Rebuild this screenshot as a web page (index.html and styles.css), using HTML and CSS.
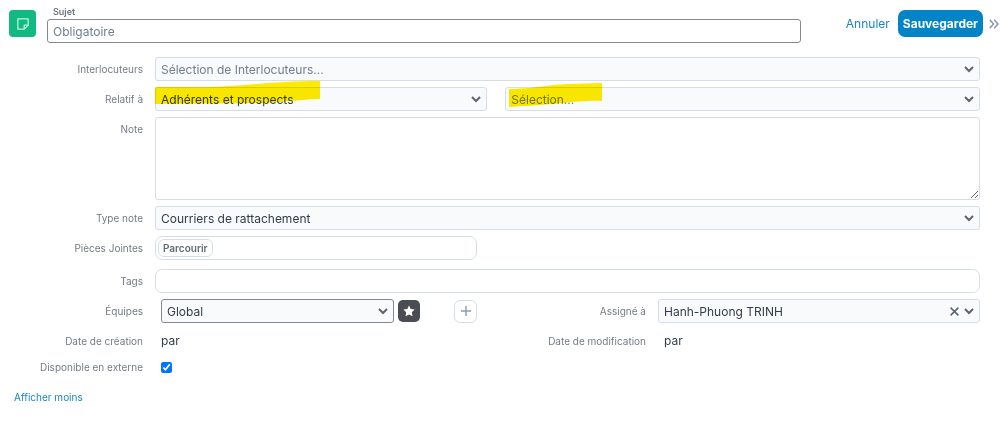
FILE: index.html
```html
<!DOCTYPE html>
<html lang="fr">
<head>
    <meta charset="UTF-8">
    <meta name="viewport" content="width=device-width, initial-scale=1.0">
    <title>Nouvelle note</title>
    <link rel="stylesheet" href="styles.css">
</head>
<body>

<form class="note-form">
    <header class="header">
        <div class="module-icon">
            <svg width="12" height="12" viewBox="0 0 11 11" fill="none" stroke="#b5f5dc" stroke-width="1.2" stroke-linejoin="round">
                <path d="M0.8 0.8h9.4v5.8l-3.6 3.6H0.8z"/>
                <path d="M10.2 6.6H6.6v3.6"/>
            </svg>
        </div>
        <div class="subject">
            <label for="subject">Sujet</label>
            <input type="text" id="subject" class="control" placeholder="Obligatoire">
        </div>
        <div class="actions">
            <a href="#" class="cancel">Annuler</a>
            <button type="button" class="save">Sauvegarder</button>
            <button type="button" class="more" aria-label="Plus d'actions">
                <svg width="10" height="10" viewBox="0 0 10 10" fill="none" stroke="#8592ad" stroke-width="1.4">
                    <path d="M0.8 0.8L4.6 5L0.8 9.2M5.2 0.8L9 5L5.2 9.2"/>
                </svg>
            </button>
        </div>
    </header>

    <div class="rows">
        <div class="row">
            <label for="contacts">Interlocuteurs</label>
            <select id="contacts" class="control empty"><option>Sélection de Interlocuteurs...</option></select>
        </div>

        <div class="row">
            <label for="related">Relatif à</label>
            <div class="related">
                <div class="marked">
                    <select id="related" class="control"><option>Adhérents et prospects</option></select>
                    <svg class="marker" width="165" height="24" viewBox="0 0 165 24" fill="#ffeb00">
                        <path d="M0 6H55C90 5 120 0 165 0V18C145 18 130 22 100 22L0 23Z"/>
                    </svg>
                </div>
                <div class="marked inset">
                    <select class="control empty" aria-label="Fiche liée"><option>Sélection...</option></select>
                    <svg class="marker" width="93" height="24" viewBox="0 0 93 24" fill="#ffeb00">
                        <path d="M0 6C25 6 35 2 60 1L93 0V18C70 17 45 22 0 24Z"/>
                    </svg>
                </div>
            </div>
        </div>

        <div class="row">
            <label for="note">Note</label>
            <textarea id="note" class="control"></textarea>
        </div>

        <div class="row">
            <label for="type">Type note</label>
            <select id="type" class="control"><option>Courriers de rattachement</option></select>
        </div>

        <div class="halves">
            <div class="row">
                <span class="label">Pièces Jointes</span>
                <div class="control rounded files">
                    <button type="button" class="browse">Parcourir</button>
                </div>
            </div>
        </div>

        <div class="row tags">
            <label for="tags">Tags</label>
            <input type="text" id="tags" class="control rounded">
        </div>

        <div class="halves">
            <div class="row">
                <label for="teams">Équipes</label>
                <div class="teams">
                    <select id="teams" class="control strong"><option>Global</option></select>
                    <button type="button" class="star" aria-label="Équipe principale">
                        <svg width="12" height="12" viewBox="0 0 12 12" fill="#fff">
                            <path d="M6 0.4L7.7 4L11.6 4.5L8.8 7.3L9.5 11.3L6 9.4L2.5 11.3L3.2 7.3L0.4 4.5L4.3 4Z"/>
                        </svg>
                    </button>
                    <button type="button" class="add" aria-label="Ajouter une équipe">
                        <svg width="10" height="10" viewBox="0 0 10 10" stroke="#8c9bb5" stroke-width="1.4">
                            <path d="M5 0V10M0 5H10"/>
                        </svg>
                    </button>
                </div>
            </div>
            <div class="row">
                <label for="assigned">Assigné à</label>
                <div class="clearable">
                    <select id="assigned" class="control"><option>Hanh-Phuong TRINH</option></select>
                    <button type="button" class="clear" aria-label="Effacer">
                        <svg width="9" height="9" viewBox="0 0 9 9" stroke="#5b6470" stroke-width="1.5">
                            <path d="M0.6 0.6L8.4 8.4M8.4 0.6L0.6 8.4"/>
                        </svg>
                    </button>
                </div>
            </div>
        </div>

        <div class="halves">
            <div class="row">
                <span class="label">Date de création</span>
                <span class="value">par</span>
            </div>
            <div class="row">
                <span class="label">Date de modification</span>
                <span class="value">par</span>
            </div>
        </div>

        <div class="row check">
            <label for="external">Disponible en externe</label>
            <input type="checkbox" id="external" checked>
        </div>
    </div>

    <a href="#" class="less">Afficher moins</a>
</form>

</body>
</html>
```

FILE: styles.css
```css
* {
    box-sizing: border-box;
}
body {
    margin: 0;
    font-family: Inter, "Liberation Sans", sans-serif;
    font-size: 12px;
    color: #323d4b;
    background-color: #fff;
}
a {
    color: #1a86c4;
    text-decoration: none;
}
button {
    display: flex;
    align-items: center;
    justify-content: center;
    padding: 0;
    font: inherit;
    cursor: pointer;
    background: none;
    border: none;
}

/* header */
.header {
    display: flex;
    align-items: flex-start;
    padding: 5px 1px 0 9px;
}
.module-icon {
    display: flex;
    align-items: center;
    justify-content: center;
    width: 27px;
    height: 27px;
    margin: 5px 11px 0 0;
    background-color: #12b981;
    border-radius: 4px;
}
.subject {
    flex: 1;
}
.subject label {
    display: block;
    padding-left: 6px;
    font-size: 9px;
    font-weight: 600;
    line-height: 14px;
    color: #6d7580;
}
.subject .control {
    display: block;
    border-color: #858a90;
}
.actions {
    display: flex;
    align-items: center;
    margin: 5px 0 0 45px;
}
.save {
    height: 27px;
    margin: 0 6px 0 8px;
    padding: 0 5px;
    font-weight: 700;
    color: #fff;
    background-color: #0284c7;
    border-radius: 7px;
}

/* fields */
.rows {
    display: grid;
    gap: 6px;
    padding: 14px 20px 0 0;
}
.row {
    display: grid;
    grid-template-columns: 143px minmax(0, 1fr);
    column-gap: 12px;
}
.halves {
    display: grid;
    grid-template-columns: 1fr 1fr;
    column-gap: 26px;
}
.row label,
.label {
    font-size: 10px;
    line-height: 24px;
    text-align: right;
    color: #747c87;
}
.control {
    width: 100%;
    height: 24px;
    padding: 0 5px;
    font: inherit;
    color: inherit;
    background-color: #fff;
    border: 1px solid #d5dde8;
    border-radius: 3px;
}
.control::placeholder {
    color: #6f7f90;
    opacity: 1;
}
select.control {
    appearance: none;
    background: #f9fafc url("data:image/svg+xml,%3Csvg xmlns='http://www.w3.org/2000/svg' width='10' height='7' fill='none' stroke='%235b6470' stroke-width='2'%3E%3Cpath d='M1 1L5 5L9 1'/%3E%3C/svg%3E") no-repeat right 5px center;
}
textarea.control {
    display: block;
    height: 83px;
}
.empty {
    color: #6f7f90;
}
.control.strong {
    border-color: #858a90;
}
.control.rounded {
    border-radius: 7px;
}
.related {
    display: grid;
    grid-template-columns: 7fr 10fr;
    gap: 18px;
}
.marked {
    position: relative;
}
/* highlighter stroke drawn over the field */
.marker {
    position: absolute;
    top: -6px;
    left: 0;
    mix-blend-mode: multiply;
    pointer-events: none;
}
.inset .marker {
    top: -4px;
    left: 4px;
}
.files {
    display: flex;
    align-items: center;
    padding: 0 2px;
}
.browse {
    height: 18px;
    padding: 0 4px;
    font-size: 10px;
    font-weight: 600;
    color: #626a74;
    border: 1px solid #d5dde8;
    border-radius: 6px;
}
.tags {
    margin-top: 3px;
}
.teams {
    display: flex;
    align-items: center;
    padding-left: 6px;
}
.teams .control {
    flex: 1;
    min-width: 0;
}
.star {
    width: 22px;
    height: 22px;
    margin: 0 34px 0 4px;
    background-color: #4a4e54;
    border-radius: 5px;
}
.add {
    width: 23px;
    height: 23px;
    border: 1px solid #d5dde8;
    border-radius: 6px;
}
.clearable {
    position: relative;
}
.clear {
    position: absolute;
    top: 0;
    right: 20px;
    width: 12px;
    height: 24px;
}
.value {
    padding-left: 6px;
    line-height: 24px;
}
.check {
    align-items: center;
    margin-top: -4px;
}
.check input {
    width: 11px;
    height: 11px;
    margin: 0 6px;
}
.less {
    display: inline-block;
    margin: 10px 14px;
    font-size: 10px;
    line-height: 16px;
}
```
